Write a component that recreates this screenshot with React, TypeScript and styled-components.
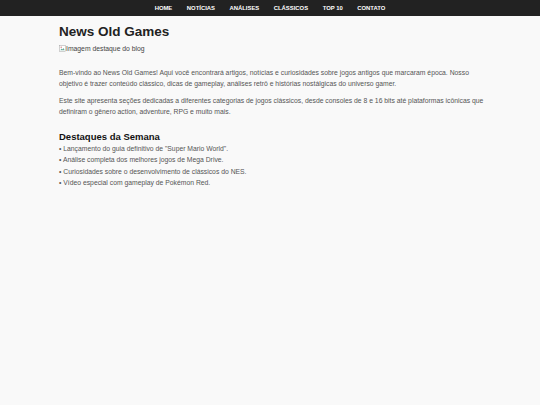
import React from "react";
import styled, { createGlobalStyle } from "styled-components";

const Global = createGlobalStyle`
  html, body { margin: 0; padding: 0; background: #f9f9f9; }
  body { font-family: "Liberation Sans", Arial, sans-serif; color: #555; }
`;

const Nav = styled.nav`
  background: #222;
  height: 16px;
  display: flex;
  justify-content: center;
  align-items: center;
  gap: 14.5px;
`;

const NavLink = styled.a`
  color: #fff;
  font-size: 5.9px;
  font-weight: bold;
  text-decoration: none;
  text-transform: uppercase;
`;

const Main = styled.main`
  padding: 8px 56px 0 59px;
`;

const Title = styled.h1`
  font-size: 13.5px;
  font-weight: bold;
  margin: 0 0 6px;
  color: #222;
`;

const BrokenImage = styled.div`
  display: flex;
  align-items: center;
  font-size: 6.8px;
  color: #444;
  margin-bottom: 15px;
`;

const BrokenIcon = styled.svg`
  width: 7px;
  height: 7px;
`;

const Para = styled.p`
  font-size: 6.8px;
  line-height: 11px;
  margin: 0 0 6px;
`;

const SectionTitle = styled.h2`
  font-size: 9.5px;
  font-weight: bold;
  margin: 14px 0 1px;
  color: #111;
`;

const List = styled.ul`
  list-style: none;
  padding: 0;
  margin: 0;
`;

const Item = styled.li`
  font-size: 6.8px;
  line-height: 11.3px;
`;

const links = ["Home", "Notícias", "Análises", "Clássicos", "Top 10", "Contato"];

export default function App() {
  return (
    <>
      <Global />
      <Nav>
        {links.map((l) => (
          <NavLink key={l} href="#">{l}</NavLink>
        ))}
      </Nav>
      <Main>
        <Title>News Old Games</Title>
        <BrokenImage>
          <BrokenIcon viewBox="0 0 16 16">
            <rect x="1.5" y="1.5" width="13" height="13" fill="#fff" stroke="#999" />
            <path d="M3 12 L6 8 L8 10 L10 7 L13 12 Z" fill="#6a9" />
            <circle cx="5" cy="5" r="1.5" fill="#c66" />
          </BrokenIcon>
          Imagem destaque do blog
        </BrokenImage>
        <Para>
          Bem-vindo ao News Old Games! Aqui você encontrará artigos, notícias e curiosidades sobre jogos antigos que marcaram época. Nosso objetivo é trazer conteúdo clássico, dicas de gameplay, análises retrô e histórias nostálgicas do universo gamer.
        </Para>
        <Para>
          Este site apresenta seções dedicadas a diferentes categorias de jogos clássicos, desde consoles de 8 e 16 bits até plataformas icônicas que definiram o gênero action, adventure, RPG e muito mais.
        </Para>
        <SectionTitle>Destaques da Semana</SectionTitle>
        <List>
          <Item>• Lançamento do guia definitivo de "Super Mario World".</Item>
          <Item>• Análise completa dos melhores jogos de Mega Drive.</Item>
          <Item>• Curiosidades sobre o desenvolvimento de clássicos do NES.</Item>
          <Item>• Vídeo especial com gameplay de Pokémon Red.</Item>
        </List>
      </Main>
    </>
  );
}
